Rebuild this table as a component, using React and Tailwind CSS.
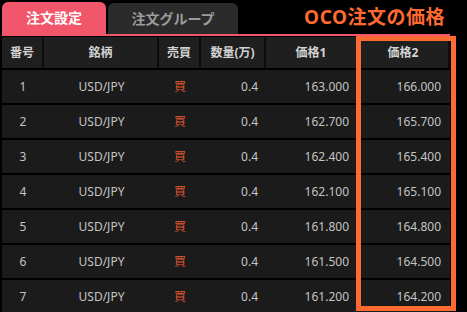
import React from "react";

const rows = [
  ["1", "163.000", "166.000"],
  ["2", "162.700", "165.700"],
  ["3", "162.400", "165.400"],
  ["4", "162.100", "165.100"],
  ["5", "161.800", "164.800"],
  ["6", "161.500", "164.500"],
  ["7", "161.200", "164.200"],
];

const cols = "grid grid-cols-[42px_115px_42px_65px_92px_92px]";

function App() {
  return (
    <div
      className="relative w-[467px] h-[312px] bg-black overflow-hidden"
      style={{ fontFamily: "'Noto Sans', 'Noto Sans CJK JP', sans-serif" }}
    >
      {/* tabs */}
      <div className="flex items-end h-[36px] pl-[2px] pr-[17px]">
        <div className="flex items-end w-[448px] h-[34px] border-b-2 border-[#f2566a]">
          <div className="w-[104px] h-[32px] rounded-t-[6px] bg-[#f2566a] flex items-center justify-center text-white font-bold text-[14px] leading-none">
            注文設定
          </div>
          <div className="ml-[2px] w-[130px] h-[31px] rounded-t-[6px] bg-[#2b2b2b] flex items-center justify-center text-[#9c9c9c] font-bold text-[14px] leading-none">
            注文グループ
          </div>
          <div className="flex-1 h-full flex items-center justify-end pr-[5px] pb-[2px] text-[#ff6a33] font-bold text-[19px] leading-none tracking-[0.5px]">
            OCO注文の価格
          </div>
        </div>
      </div>

      {/* table */}
      <div className="ml-[2px] w-[448px] mt-[1px]">
        <div className={`${cols} h-[31px] bg-[#1f1f1f] text-[#d2d2d2] font-bold text-[12px]`}>
          {["番号", "銘柄", "売買", "数量(万)", "価格1", "価格2"].map((h) => (
            <div key={h} className="flex items-center justify-center border-r-2 border-[#0c0c0c]">
              {h}
            </div>
          ))}
        </div>
        {rows.map(([n, p1, p2]) => (
          <div key={n} className={`${cols} h-[33px] mt-[2px] bg-[#1b1b1b] text-[#c4c4c4] text-[12px]`}>
            <div className="flex items-center justify-center">{n}</div>
            <div className="flex items-center justify-center">USD/JPY</div>
            <div className="flex items-center justify-center text-[#e0582f]">買</div>
            <div className="flex items-center justify-end pr-[8px]">0.4</div>
            <div className="flex items-center justify-end pr-[9px]">{p1}</div>
            <div className="flex items-center justify-end pr-[9px]">{p2}</div>
          </div>
        ))}
      </div>

      {/* highlight box */}
      <div className="absolute left-[356px] top-[36px] w-[100px] h-[275px] border-[5px] border-[#ff6a33]"></div>
    </div>
  );
}

export default App;
